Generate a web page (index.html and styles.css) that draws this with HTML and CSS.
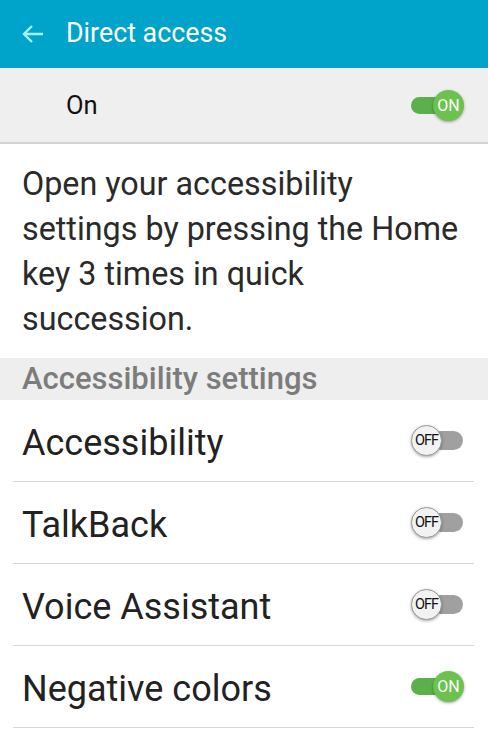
FILE: index.html
```html
<!DOCTYPE html>
<html lang="en">
<head>
<meta charset="UTF-8" />
<meta name="viewport" content="width=device-width, initial-scale=1" />
<title>Direct access</title>
<link rel="stylesheet" href="styles.css">
</head>
<body>

<header class="app-bar">
  <svg class="back" width="24" height="20" viewBox="0 0 24 20">
    <path d="M22 10H3M11 2L3 10l8 8" fill="none" stroke="#a6f0f6" stroke-width="2.4" />
  </svg>
  <h1>Direct access</h1>
</header>

<div class="master">
  <span>On</span>
  <span class="switch on"><span class="thumb">ON</span></span>
</div>

<p class="desc">Open your accessibility settings by pressing the Home key 3 times in quick succession.</p>

<div class="section">Accessibility settings</div>

<ul class="list">
  <li><span class="label">Accessibility</span><span class="switch off"><span class="thumb">OFF</span></span></li>
  <li><span class="label">TalkBack</span><span class="switch off"><span class="thumb">OFF</span></span></li>
  <li><span class="label">Voice Assistant</span><span class="switch off"><span class="thumb">OFF</span></span></li>
  <li><span class="label">Negative colors</span><span class="switch on"><span class="thumb">ON</span></span></li>
</ul>

</body>
</html>
```

FILE: styles.css
```css
body {
  margin: 0;
  font-family: Roboto, "Noto Sans", sans-serif;
  background: #fff;
  color: #222;
}
.app-bar {
  height: 68px;
  background: #00a3c9;
  display: flex;
  align-items: center;
  padding-left: 21px;
}
.app-bar h1 {
  margin: 0 0 2px 21px;
  font-size: 26.8px;
  font-weight: normal;
  color: #fff;
}
.back {
  display: block;
}
.master {
  height: 74px;
  background: #efefef;
  border-bottom: 2px solid #d4d4d4;
  display: flex;
  align-items: center;
  justify-content: space-between;
  padding: 0 25px 0 66px;
  font-size: 25.5px;
  color: #111;
}
.desc {
  margin: 0;
  padding: 18px 22px 16px;
  font-size: 32.3px;
  line-height: 45px;
  color: #2a2a2a;
}
.section {
  height: 42px;
  line-height: 42px;
  background: #eeeeee;
  padding-left: 22px;
  font-size: 31px;
  font-weight: 500;
  color: #7c7c7c;
}
.list {
  list-style: none;
  margin: 0;
  padding: 0 14px 0 13px;
}
.list li {
  height: 81px;
  border-bottom: 1px solid #d8d8d8;
  display: flex;
  align-items: center;
  justify-content: space-between;
  padding: 0 11px 0 9px;
  font-size: 36px;
  color: #222;
}
.label {
  padding-top: 4px;
}
.switch {
  position: relative;
  width: 52px;
  height: 31px;
}
.switch::before {
  content: "";
  position: absolute;
  top: 7px;
  left: 0;
  right: 0;
  height: 17px;
  border-radius: 9px;
}
.switch.on::before {
  background: #5cb04c;
}
.switch.off::before {
  background: #a0a0a0;
  left: 20px;
  top: 6px;
  height: 19px;
  border-radius: 10px;
}
.thumb {
  position: absolute;
  top: 0;
  width: 31px;
  height: 31px;
  border-radius: 50%;
  display: flex;
  align-items: center;
  justify-content: center;
  box-shadow: 0 1px 3px rgba(0,0,0,0.35);
}
.on .thumb {
  right: -1px;
  background: #6cc24e;
  color: #fff;
  font-size: 16px;
}
.off .thumb {
  left: 0;
  background: #f2f2f2;
  border: 1px solid #9a9a9a;
  box-sizing: border-box;
  color: #111;
  font-size: 14.5px;
  letter-spacing: -1px;
}
```
